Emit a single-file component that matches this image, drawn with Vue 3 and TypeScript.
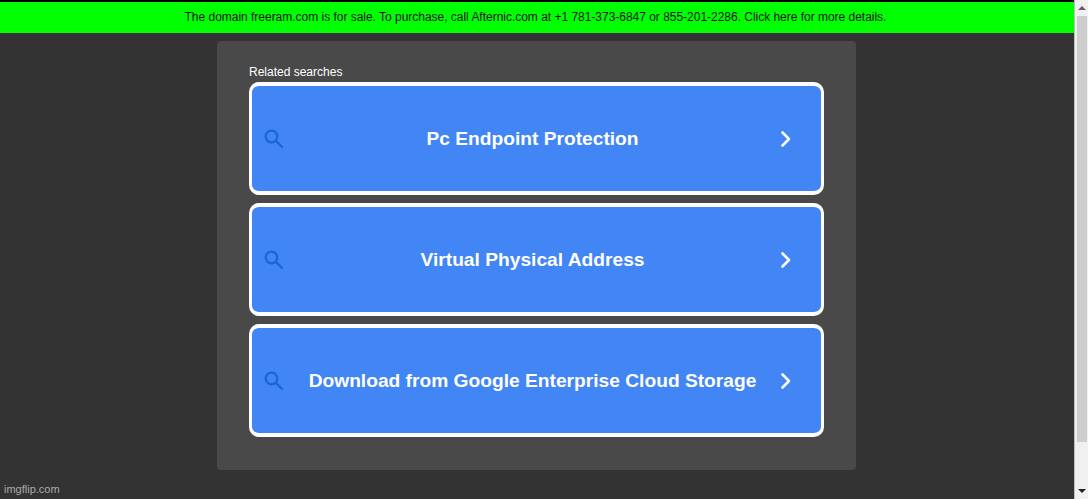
<script setup lang="ts">
const searches: string[] = [
  "Pc Endpoint Protection",
  "Virtual Physical Address",
  "Download from Google Enterprise Cloud Storage",
];
</script>

<template>
  <div class="window">
    <div class="page">
      <a class="banner">
        The domain freeram.com is for sale. To purchase, call Afternic.com at +1 781-373-6847 or 855-201-2286. Click here for more details.
      </a>
      <main class="content">
        <section class="card">
          <h2 class="title">Related searches</h2>
          <div class="list">
            <a v-for="item in searches" :key="item" class="result">
              <svg class="search" viewBox="0 0 24 24" width="24" height="24" aria-hidden="true">
                <circle cx="9.5" cy="9.5" r="5.8" fill="none" stroke="currentColor" stroke-width="2.2" />
                <path d="M14 14l6.5 6.5" fill="none" stroke="currentColor" stroke-width="2.4" />
              </svg>
              <span class="label">{{ item }}</span>
              <svg class="chevron" viewBox="0 0 24 24" width="24" height="24" aria-hidden="true">
                <path d="M8.5 5.5L15 12l-6.5 6.5" fill="none" stroke="currentColor" stroke-width="2.6" stroke-linecap="round" stroke-linejoin="round" />
              </svg>
            </a>
          </div>
        </section>
      </main>
    </div>
    <div class="scrollbar">
      <span class="arrow up"></span>
      <span class="track"><span class="thumb"></span></span>
      <span class="arrow down"></span>
    </div>
    <span class="mark">imgflip.com</span>
  </div>
</template>

<style scoped>
.window {
  position: relative;
  display: flex;
  height: 499px;
  overflow: hidden;
  background: #333;
  font-family: "Liberation Sans", Arial, sans-serif;
}

.page {
  flex: 1;
  min-width: 0;
  display: flex;
  flex-direction: column;
}

.banner {
  height: 31px;
  padding-right: 3px;
  border-top: 2px solid #000;
  background: #0f0;
  color: #111;
  font-size: 12px;
  letter-spacing: -0.02px;
  line-height: 31px;
  text-align: center;
}

.content {
  display: flex;
  justify-content: center;
  padding-top: 8px;
  padding-right: 1px;
}

.card {
  box-sizing: border-box;
  width: 639px;
  height: 429px;
  padding: 24px 32px;
  border-radius: 4px;
  background: #494949;
}

.title {
  margin: 0;
  height: 17px;
  color: #fff;
  font-size: 12px;
  font-weight: 400;
  line-height: 14px;
}

.list {
  display: flex;
  flex-direction: column;
  gap: 8px;
}

.result {
  box-sizing: border-box;
  display: flex;
  align-items: center;
  height: 113px;
  padding: 0 23px 0 10px;
  border: solid #fff;
  border-width: 4px 3px;
  border-radius: 10px;
  background: #4285f4;
  color: #fff;
}

.search {
  flex: none;
  color: #1a66d2;
}

.label {
  flex: 1;
  padding: 1px 0 0 5px;
  font-size: 19.2px;
  font-weight: 700;
  text-align: center;
}

.chevron {
  flex: none;
}

.scrollbar {
  flex: none;
  box-sizing: border-box;
  width: 14px;
  display: flex;
  flex-direction: column;
  align-items: center;
  border-left: 1px solid #bdbdbd;
  background: #f0f0f0;
}

.arrow {
  flex: none;
  width: 0;
  height: 0;
  margin: 6px 0;
  border-left: 4px solid transparent;
  border-right: 4px solid transparent;
}

.arrow.up {
  border-bottom: 4px solid #606060;
}

.arrow.down {
  border-top: 4px solid #222;
}

.track {
  flex: 1;
  width: 100%;
  display: flex;
  justify-content: center;
}

.thumb {
  width: 10px;
  height: 426px;
  background: #cdcdcd;
}

.mark {
  position: absolute;
  left: 4px;
  bottom: 3px;
  color: #aaa;
  font-size: 11px;
  line-height: 13px;
}
</style>
